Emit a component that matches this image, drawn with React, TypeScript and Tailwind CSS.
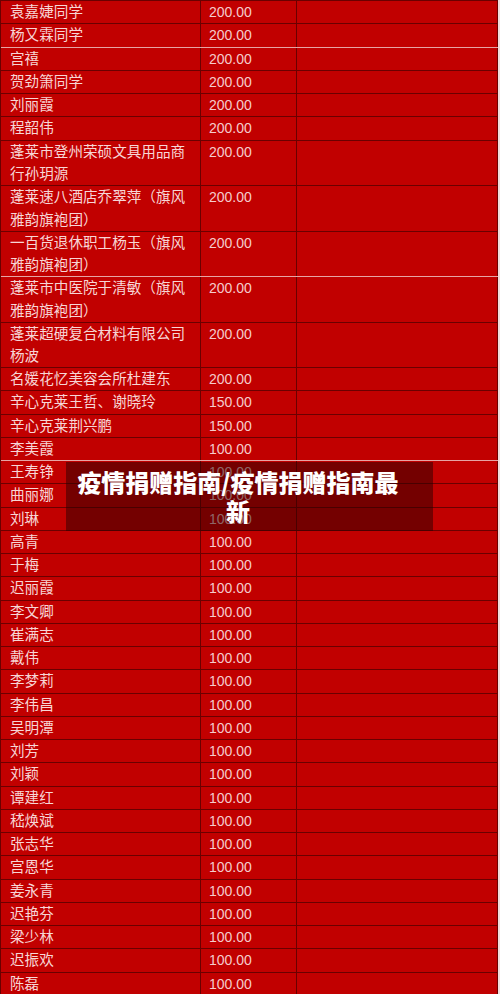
import React from "react";

type Row = { lines: string[]; amount: string; light?: boolean };

const rows: Row[] = [
  { lines: ["袁嘉婕同学"], amount: "200.00" },
  { lines: ["杨又霖同学"], amount: "200.00", light: true },
  { lines: ["宫禧"], amount: "200.00" },
  { lines: ["贺劲箫同学"], amount: "200.00" },
  { lines: ["刘丽霞"], amount: "200.00" },
  { lines: ["程韶伟"], amount: "200.00" },
  { lines: ["蓬莱市登州荣硕文具用品商", "行孙玥源"], amount: "200.00" },
  { lines: ["蓬莱速八酒店乔翠萍（旗风", "雅韵旗袍团）"], amount: "200.00" },
  { lines: ["一百货退休职工杨玉（旗风", "雅韵旗袍团）"], amount: "200.00", light: true },
  { lines: ["蓬莱市中医院于清敏（旗风", "雅韵旗袍团）"], amount: "200.00" },
  { lines: ["蓬莱超硬复合材料有限公司", "杨波"], amount: "200.00" },
  { lines: ["名媛花忆美容会所杜建东"], amount: "200.00" },
  { lines: ["辛心克莱王哲、谢晓玲"], amount: "150.00" },
  { lines: ["辛心克莱荆兴鹏"], amount: "150.00" },
  { lines: ["李美霞"], amount: "100.00", light: true },
  { lines: ["王寿铮"], amount: "100.00" },
  { lines: ["曲丽娜"], amount: "100.00" },
  { lines: ["刘琳"], amount: "100.00" },
  { lines: ["高青"], amount: "100.00" },
  { lines: ["于梅"], amount: "100.00" },
  { lines: ["迟丽霞"], amount: "100.00" },
  { lines: ["李文卿"], amount: "100.00" },
  { lines: ["崔满志"], amount: "100.00" },
  { lines: ["戴伟"], amount: "100.00" },
  { lines: ["李梦莉"], amount: "100.00" },
  { lines: ["李伟昌"], amount: "100.00" },
  { lines: ["吴明潭"], amount: "100.00" },
  { lines: ["刘芳"], amount: "100.00" },
  { lines: ["刘颖"], amount: "100.00" },
  { lines: ["谭建红"], amount: "100.00" },
  { lines: ["嵇焕斌"], amount: "100.00" },
  { lines: ["张志华"], amount: "100.00" },
  { lines: ["宫恩华"], amount: "100.00" },
  { lines: ["姜永青"], amount: "100.00" },
  { lines: ["迟艳芬"], amount: "100.00" },
  { lines: ["梁少林"], amount: "100.00" },
  { lines: ["迟振欢"], amount: "100.00" },
  { lines: ["陈磊"], amount: "100.00" },
];

export default function App() {
  return (
    <div
      className="relative w-[500px] h-[994px] overflow-hidden bg-[#f1dcdc]"
      style={{ fontFamily: '"Liberation Sans", "Noto Sans CJK SC", sans-serif' }}
    >
      <div className="w-[498px] border-l border-t border-[#6a0000] bg-[#c10000]">
        {rows.map((r, i) => (
          <div
            key={i}
            className={
              "flex box-border border-b " +
              (r.light ? "border-[#e6a4a4] " : "border-[#6a0000] ") +
              (r.lines.length > 1 ? "h-[45.5px]" : "h-[23.25px]")
            }
          >
            <div className="w-[200px] shrink-0 border-r border-[#6a0000] pl-[9px] pt-[0px] text-[14.6px] leading-[22.5px] text-[#f7d6d6] whitespace-nowrap">
              {r.lines.map((l, j) => (
                <div key={j}>{l}</div>
              ))}
            </div>
            <div className="w-[96px] shrink-0 border-r border-[#6a0000] pl-[8px] text-[14px] leading-[22.5px] text-[#f5cccc]">
              {r.amount}
            </div>
            <div className="flex-1 border-r border-[#6a0000]" />
          </div>
        ))}
      </div>

      <div className="absolute left-[66px] top-[462px] w-[367px] h-[69px] bg-[rgba(40,0,0,0.5)] pl-[10px] pr-[33px] pt-[5px]">
        <div
          className="text-center text-white font-black text-[24px] leading-[29px]"
          style={{ fontFamily: '"Noto Sans CJK SC", "Noto Sans", sans-serif' }}
        >
          疫情捐赠指南/疫情捐赠指南最新
        </div>
      </div>
    </div>
  );
}
